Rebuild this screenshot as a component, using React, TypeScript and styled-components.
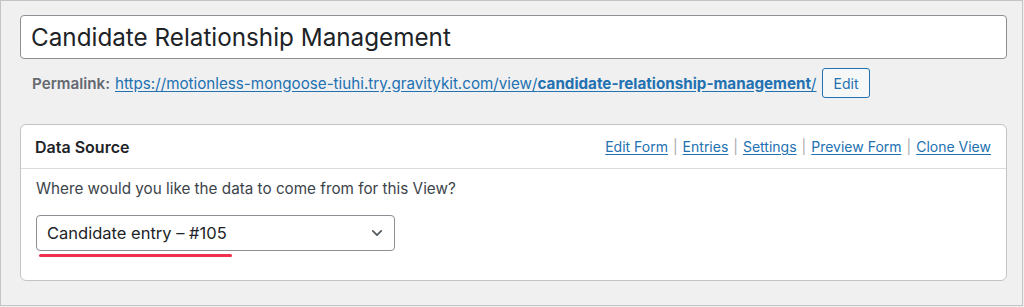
import React from "react"
import styled, { createGlobalStyle } from "styled-components"

const GlobalStyle = createGlobalStyle`
    html, body {
        margin: 0;
        padding: 0;
        background: #f0f0f1;
    }
    body {
        font-family: Inter, "Noto Sans", sans-serif;
        color: #1d2327;
    }
`

const Frame = styled.div`
    box-sizing: border-box;
    width: 1023px;
    height: 306px;
    border: 1px solid #c3c4c7;
    background: #f0f0f1;
    padding: 14px 16px 0 19px;
    display: flex;
    flex-direction: column;
`

const TitleInput = styled.input`
    box-sizing: border-box;
    width: 987px;
    height: 44px;
    border: 1px solid #8c8f94;
    border-radius: 4px;
    background: #fff;
    padding: 0 10px;
    font-family: Inter, sans-serif;
    font-size: 24.25px;
    color: #1d2327;
    outline: none;
`

const PermalinkRow = styled.div`
    display: flex;
    align-items: center;
    gap: 5px;
    margin-top: 9px;
    padding-left: 12px;
    font-size: 15.2px;
    height: 30px;
`

const Label = styled.strong`
    color: #646970;
    font-weight: 600;
`

const Link = styled.a`
    color: #2271b1;
    text-decoration: underline;
    text-underline-offset: 2px;
`

const Button = styled.button`
    box-sizing: border-box;
    height: 30px;
    padding: 0 11px;
    border: 1px solid #2271b1;
    border-radius: 3px;
    background: #f6f7f7;
    color: #2271b1;
    font-family: Inter, sans-serif;
    font-size: 14px;
`

const Card = styled.section`
    box-sizing: border-box;
    width: 987px;
    margin-top: 26px;
    background: #fff;
    border: 1px solid #c3c4c7;
    border-radius: 6px;
`

const CardHeader = styled.header`
    display: flex;
    justify-content: space-between;
    align-items: center;
    height: 43px;
    padding: 0 15px 0 14px;
    border-bottom: 1px solid #dcdcde;
`

const CardTitle = styled.h2`
    margin: 0;
    font-size: 16px;
    font-weight: 600;
    color: #1d2327;
`

const Actions = styled.nav`
    display: flex;
    align-items: center;
    gap: 5px;
    font-size: 14px;
`

const Sep = styled.span`
    color: #a7aaad;
`

const CardBody = styled.div`
    padding: 10px 15px 23px 15px;
`

const Question = styled.p`
    margin: 0;
    font-size: 15.25px;
    color: #3c434a;
    line-height: 20px;
`

const SelectBox = styled.div`
    box-sizing: border-box;
    margin-top: 16px;
    width: 359px;
    height: 36px;
    border: 1px solid #8c8f94;
    border-radius: 4px;
    display: flex;
    align-items: center;
    justify-content: space-between;
    padding: 0 10px 0 10px;
    font-size: 16.5px;
    color: #1d2327;
`

const Underline = styled.div`
    width: 193px;
    height: 3px;
    margin: 3px 0 0 3px;
    border-radius: 2px;
    background: #f0304c;
`

const links = ["Edit Form", "Entries", "Settings", "Preview Form", "Clone View"]

export default function App() {
    return (
        <>
            <GlobalStyle />
            <Frame>
                <TitleInput defaultValue="Candidate Relationship Management" />
                <PermalinkRow>
                    <Label>Permalink:</Label>
                    <Link href="#">
                        https://motionless-mongoose-tiuhi.try.gravitykit.com/view/
                        <strong>candidate-relationship-management</strong>/
                    </Link>
                    <Button>Edit</Button>
                </PermalinkRow>
                <Card>
                    <CardHeader>
                        <CardTitle>Data Source</CardTitle>
                        <Actions>
                            {links.map((l, i) => (
                                <React.Fragment key={l}>
                                    {i > 0 && <Sep>|</Sep>}
                                    <Link href="#">{l}</Link>
                                </React.Fragment>
                            ))}
                        </Actions>
                    </CardHeader>
                    <CardBody>
                        <Question>Where would you like the data to come from for this View?</Question>
                        <SelectBox>
                            <span>Candidate entry – #105</span>
                            <svg width="14" height="14" viewBox="0 0 20 20" fill="none">
                                <path d="M4 7l6 6 6-6" stroke="#50575e" strokeWidth="2.4" strokeLinecap="round" strokeLinejoin="round" />
                            </svg>
                        </SelectBox>
                        <Underline />
                    </CardBody>
                </Card>
            </Frame>
        </>
    )
}
